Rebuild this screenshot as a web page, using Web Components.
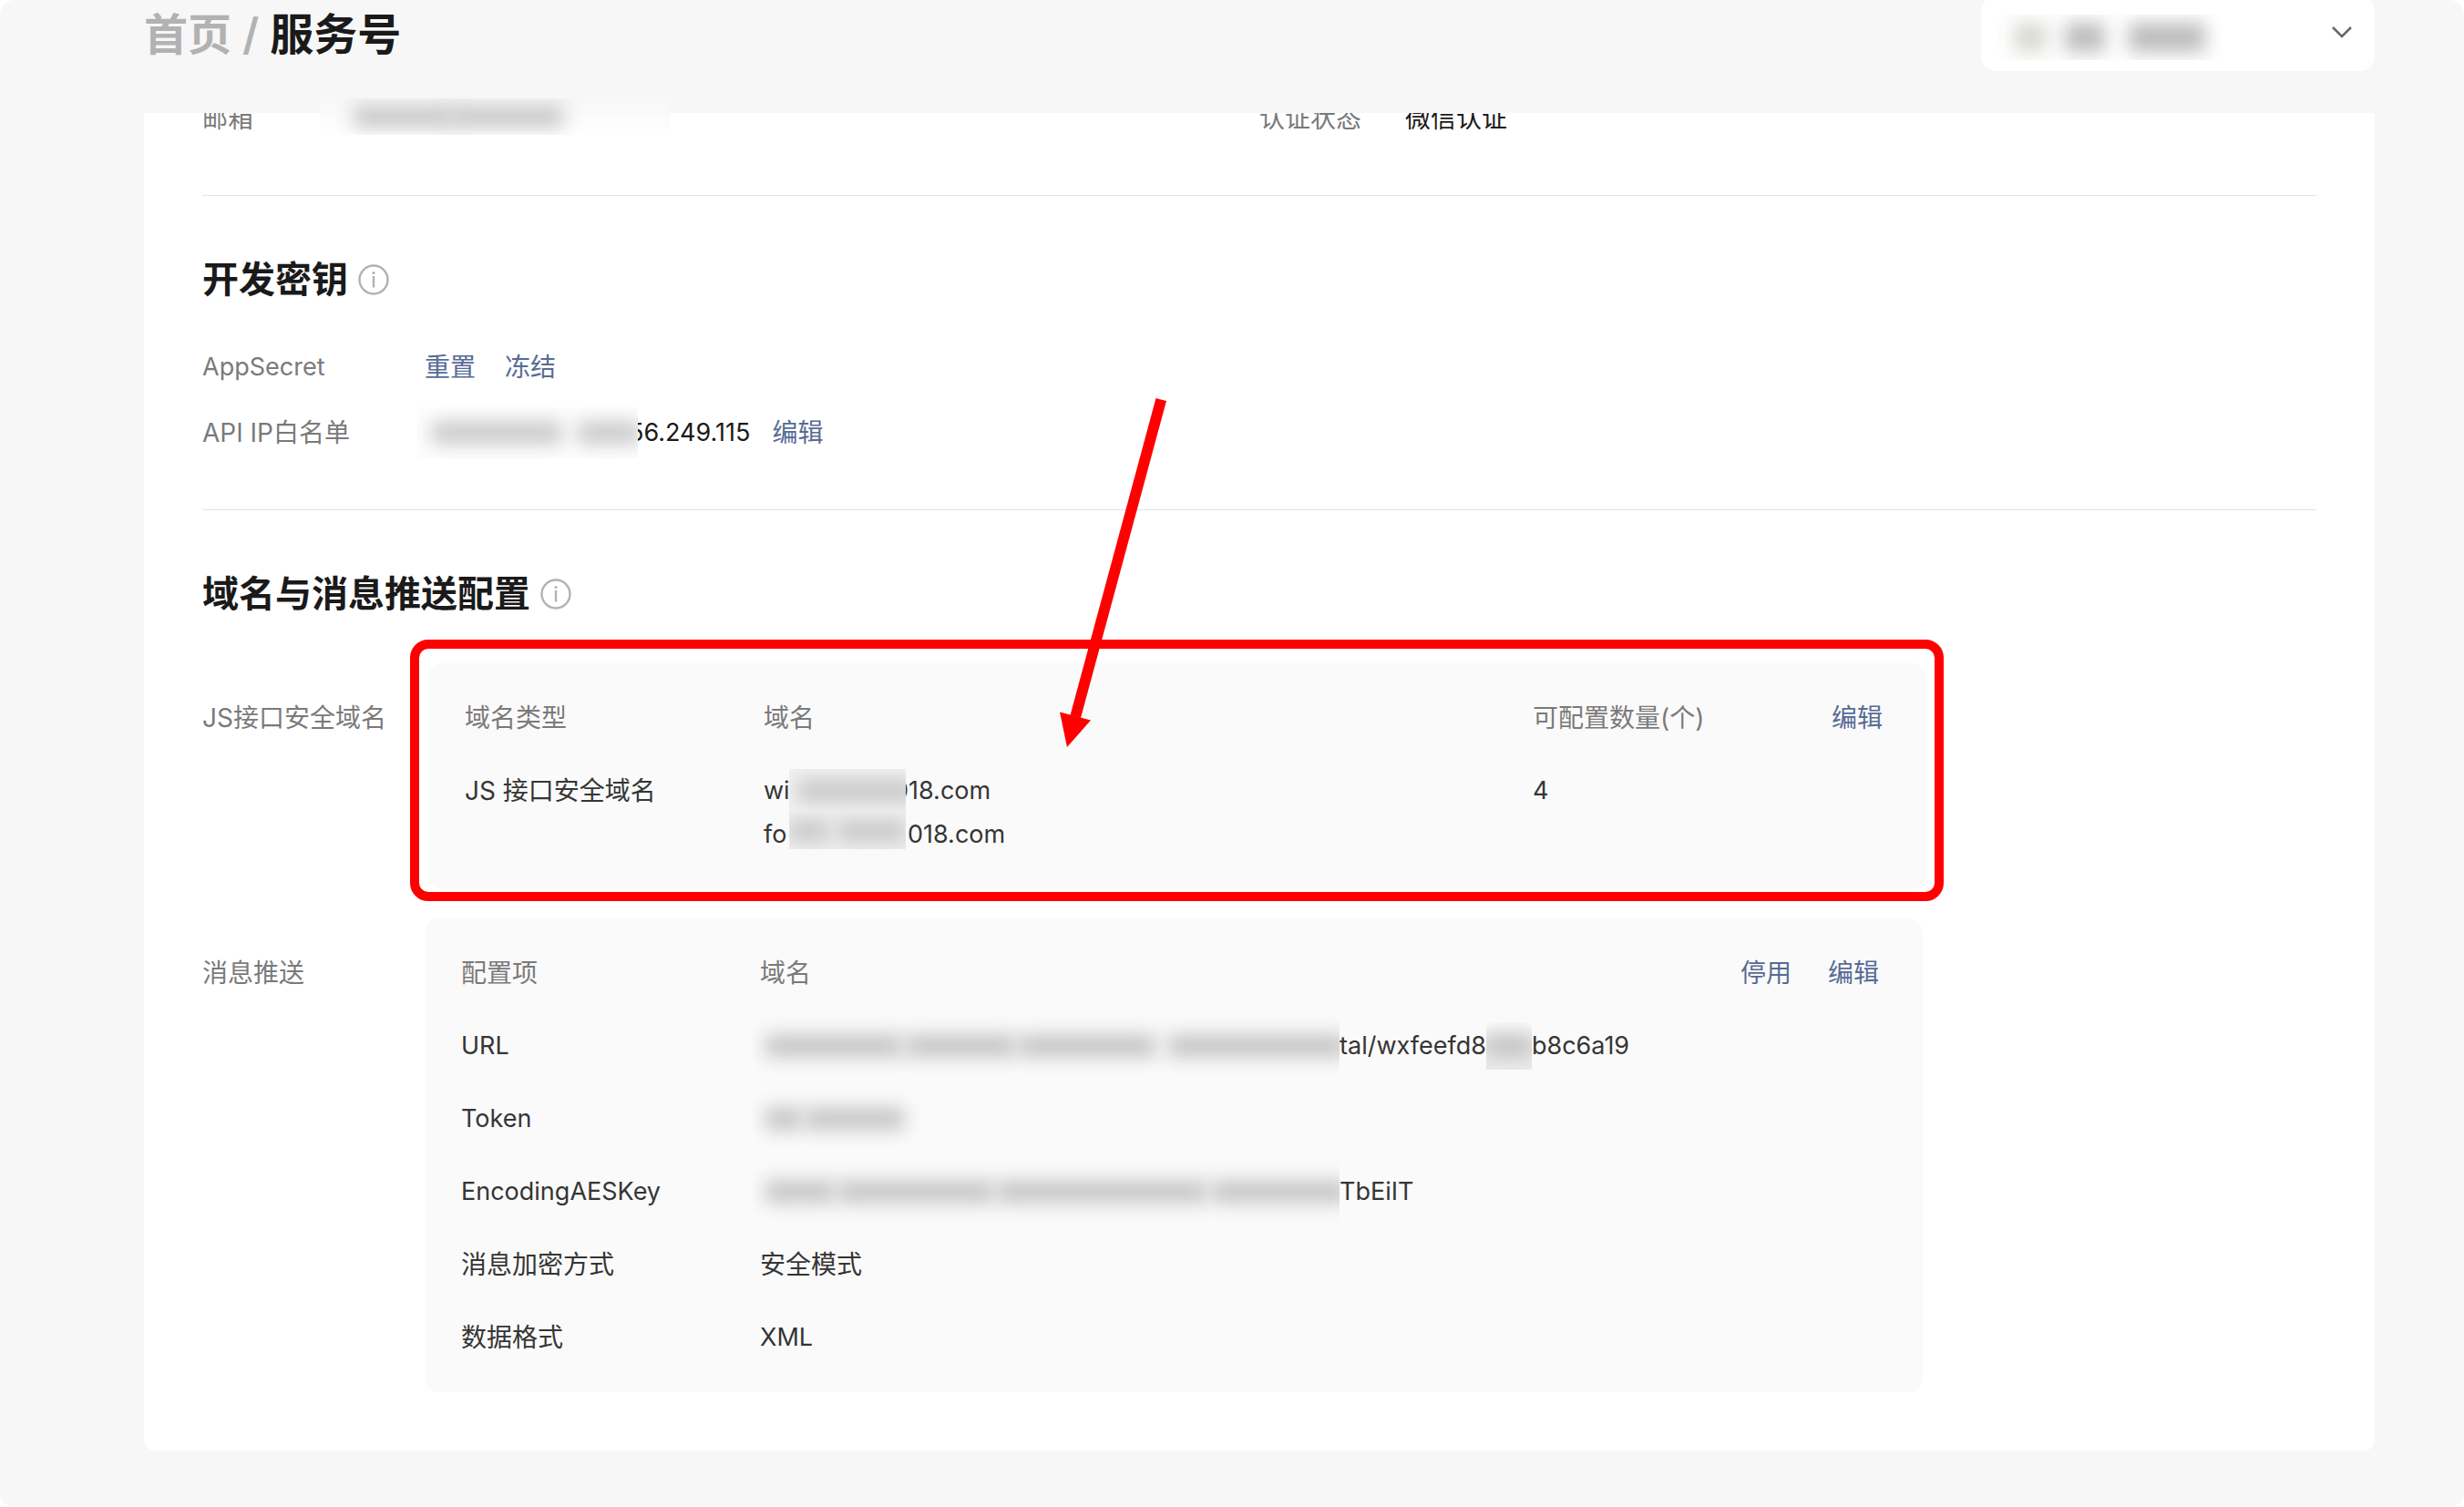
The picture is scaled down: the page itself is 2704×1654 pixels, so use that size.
<!DOCTYPE html>
<html lang="zh-CN">
<head>
<meta charset="utf-8">
<title>服务号</title>
<style>
  body {
    background: #fff;
    color: #1a1a1a;
    font-family: Inter, "Noto Sans CJK SC", sans-serif;
    font-size: 28px;
    line-height: 40px;
    margin: 0;
  }
</style>
</head>
<body>
<account-page>
  <bread-crumb slot="header" parent="首页" current="服务号"></bread-crumb>
  <account-select slot="header"></account-select>

  <profile-row></profile-row>

  <settings-section heading="开发密钥">
    <field-row label="AppSecret" latin>
      <text-link>重置</text-link>
      <text-link>冻结</text-link>
    </field-row>
    <field-row label="API IP白名单">
      <ip-list></ip-list>
    </field-row>
  </settings-section>

  <settings-section heading="域名与消息推送配置">
    <field-row label="JS接口安全域名" panel>
      <domain-table></domain-table>
    </field-row>
    <field-row label="消息推送" panel>
      <push-table></push-table>
    </field-row>
  </settings-section>
</account-page>

<script>
// every element here only needs a shadow root filled with its own markup
class BaseElement extends HTMLElement {
  constructor() {
    super();
    this.root = this.attachShadow({ mode: 'open' });
  }

  connectedCallback() {
    const template = document.createElement('template');
    template.innerHTML = this.render();
    this.root.replaceChildren(template.content.cloneNode(true));
  }
}

// shared by the two grey panels
const tableStyle = `
  :host {
    background: #fafafa;
    border-radius: 16px;
    box-sizing: border-box;
    color: #353535;
    display: block;
    flex: 0 1 1644px;
    line-height: 48px;
    padding: 36px 48px 36px 40px;
    position: relative;
  }
  table {
    border-collapse: collapse;
    table-layout: fixed;
    width: 100%;
  }
  th, td {
    font-weight: 400;
    padding: 0 0 32px;
    text-align: left;
    vertical-align: top;
    white-space: nowrap;
  }
  thead th {
    color: #7a7a7a;
  }
  tbody tr:last-child > * {
    padding-bottom: 0;
  }
  .name {
    width: 328px;
  }
  .latin {
    font-size: 27px;
  }
  .line {
    align-items: center;
    display: flex;
    height: 48px;
  }
`;

// account-page.js
class AccountPage extends BaseElement {
  render() {
    return `
    <style>
      :host {
        background: #f7f7f7;
        border-radius: 16px;
        box-sizing: border-box;
        display: block;
        min-height: 100vh;
        overflow: hidden;
        padding: 0 98px 62px 158px;
      }
      header {
        align-items: flex-start;
        display: flex;
        height: 124px;
        justify-content: space-between;
      }
      main {
        background: #fff;
        border-radius: 0 0 12px 12px;
        padding: 0 64px;
      }
    </style>
    <header><slot name="header"></slot></header>
    <main><slot></slot></main>`;
  }
}

// bread-crumb.js
class BreadCrumb extends BaseElement {
  render() {
    return `
    <style>
      :host {
        display: block;
        font-size: 48px;
        font-weight: 600;
        line-height: 76px;
      }
      nav {
        display: flex;
        gap: 12px;
      }
      a, .sep {
        color: #b2b2b2;
        text-decoration: none;
      }
    </style>
    <nav>
      <a href="#">${this.getAttribute('parent')}</a>
      <span class="sep">/</span>
      <span>${this.getAttribute('current')}</span>
    </nav>`;
  }
}

// account-select.js
class AccountSelect extends BaseElement {
  render() {
    return `
    <style>
      :host {
        background: #fff;
        border-radius: 16px;
        display: block;
        height: 82px;
        margin-top: -4px;
        position: relative;
        width: 432px;
      }
      select {
        appearance: none;
        background: none;
        border: none;
        height: 100%;
        width: 100%;
      }
      blur-mask {
        left: 0;
        position: absolute;
        top: 20px;
      }
      svg {
        pointer-events: none;
        position: absolute;
        right: 24px;
        top: 32px;
      }
    </style>
    <select aria-label="账号"><option></option></select>
    <blur-mask width="280" height="50" bars="36-36-#d8d8d0,92-44,162-84" thick="32" shade="#bcbcbc"></blur-mask>
    <svg width="24" height="14" viewBox="0 0 24 14" fill="none" stroke="#666" stroke-width="2.5">
      <path d="M2 2l10 10L22 2"/>
    </svg>`;
  }
}

// blur-mask.js
// bars is a list of start-width pairs in pixels, with an optional colour
class BlurMask extends BaseElement {
  render() {
    const height = Number(this.getAttribute('height'));
    const thick = Number(this.getAttribute('thick') || 24);
    const shade = this.getAttribute('shade') || '#c4c4c4';
    const bars = this.getAttribute('bars').split(',').map((bar) => {
      const [start, width, color] = bar.split('-');
      return `<i style="left:${start}px;width:${width}px;background:${color || shade}"></i>`;
    }).join('');
    return `
    <style>
      :host {
        background: ${this.getAttribute('fill') || 'none'};
        display: block;
        flex: none;
        height: ${height}px;
        overflow: hidden;
        position: relative;
        width: ${this.getAttribute('width')}px;
        z-index: 1;
      }
      i {
        filter: blur(10px);
        height: ${thick}px;
        position: absolute;
        top: ${Math.round((height - thick) / 2)}px;
      }
    </style>${bars}`;
  }
}

// text-link.js
class TextLink extends BaseElement {
  render() {
    return `
    <style>
      :host {
        display: inline-block;
      }
      a {
        color: #576b95;
        text-decoration: none;
      }
    </style>
    <a href="#"><slot></slot></a>`;
  }
}

// profile-row.js
// the row is scrolled half way under the header
class ProfileRow extends BaseElement {
  render() {
    return `
    <style>
      :host {
        border-bottom: 1px solid #e4e4e4;
        display: grid;
        grid-template-columns: 1fr 1fr;
        padding-bottom: 64px;
        position: relative;
      }
      .item {
        align-items: flex-end;
        display: flex;
        height: 26px;
        overflow: hidden;
      }
      .label {
        color: #7a7a7a;
        width: 160px;
      }
      .mask {
        left: 130px;
        position: absolute;
        top: -16px;
      }
    </style>
    <div class="item"><span class="label">邮箱</span></div>
    <div class="item"><span class="label">认证状态</span><span>微信认证</span></div>
    <blur-mask class="mask" width="384" height="40" bars="36-110,142-124" shade="#c8c8c8"
      fill="linear-gradient(#f7f7f7, #fff)"></blur-mask>`;
  }
}

// settings-section.js
class SettingsSection extends BaseElement {
  render() {
    return `
    <style>
      :host {
        border-bottom: 1px solid #e4e4e4;
        display: block;
        padding: 64px 0;
      }
      :host(:last-of-type) {
        border-bottom: none;
      }
      h2 {
        align-items: center;
        display: flex;
        font-size: 40px;
        font-weight: 600;
        gap: 11px;
        line-height: 56px;
        margin: 0 0 48px;
      }
      .rows {
        display: grid;
        gap: 32px;
      }
    </style>
    <h2>
      ${this.getAttribute('heading')}
      <svg width="34" height="34" viewBox="0 0 34 34" fill="none" stroke="#b2b2b2" stroke-width="2.4">
        <circle cx="17" cy="17" r="15.5"/>
        <circle cx="17" cy="9.5" r="1.6" fill="#b2b2b2" stroke="none"/>
        <path d="M17 13v12.500"/>
      </svg>
    </h2>
    <div class="rows"><slot></slot></div>`;
  }
}

// field-row.js
class FieldRow extends BaseElement {
  render() {
    return `
    <style>
      :host {
        display: flex;
      }
      .label {
        color: #7a7a7a;
        flex: none;
        width: 244px;
      }
      :host([latin]) .label {
        font-size: 27px;
      }
      :host([panel]) .label {
        line-height: 48px;
        padding-top: 36px;
      }
      .value {
        display: flex;
        flex: 1;
        gap: 32px;
      }
    </style>
    <span class="label">${this.getAttribute('label')}</span>
    <div class="value"><slot></slot></div>`;
  }
}

// ip-list.js
class IpList extends BaseElement {
  render() {
    return `
    <style>
      :host {
        align-items: center;
        display: flex;
        height: 40px;
      }
      blur-mask {
        margin: 0 -10px 0 -8px;
      }
      .ip {
        font-size: 27px;
        margin-right: 24px;
      }
    </style>
    <blur-mask width="242" height="56" bars="16-142,176-68" fill="#fdfdfd" shade="#c8c8c8"></blur-mask>
    <span class="ip">56.249.115</span>
    <text-link>编辑</text-link>`;
  }
}

// domain-table.js
class DomainTable extends BaseElement {
  render() {
    return `
    <style>
      ${tableStyle}
      :host {
        margin-left: 4px;
      }
      .domain {
        width: 844px;
      }
      .edit {
        text-align: right;
      }
      .start {
        width: 28px;
      }
      .under {
        margin-left: -14px;
      }
      .after {
        margin-left: 2px;
      }
      .line blur-mask {
        align-self: flex-start;
      }
      .frame {
        border: 10px solid #f00;
        border-radius: 20px;
        inset: -26px -19px -13px -20px;
        pointer-events: none;
        position: absolute;
        z-index: 2;
      }
      .arrow {
        left: 700px;
        position: absolute;
        top: -277px;
      }
    </style>
    <table>
      <thead>
        <tr>
          <th class="name">域名类型</th>
          <th class="domain">域名</th>
          <th>可配置数量(个)</th>
          <th class="edit"><text-link>编辑</text-link></th>
        </tr>
      </thead>
      <tbody>
        <tr>
          <td>JS 接口安全域名</td>
          <td class="latin">
            <div class="line">
              <span class="start">wi</span>
              <blur-mask width="128" height="48" bars="10-128" fill="#f0f0f0" shade="#c8c8c8"></blur-mask>
              <span class="under">018.com</span>
            </div>
            <div class="line">
              <span class="start">fo</span>
              <blur-mask width="128" height="40" bars="0-44,54-74" fill="#f0f0f0" shade="#c8c8c8"></blur-mask>
              <span class="after">018.com</span>
            </div>
          </td>
          <td class="latin">4</td>
          <td></td>
        </tr>
      </tbody>
    </table>
    <div class="frame">
      <svg class="arrow" width="120" height="390" viewBox="0 0 120 390" fill="#f00">
        <path d="M108.500 2l11.500 3L26 353l-11.500-3z"/>
        <path d="M3 346.500l34 9L11 385z"/>
      </svg>
    </div>`;
  }
}

// push-table.js
class PushTable extends BaseElement {
  render() {
    return `
    <style>
      ${tableStyle}
      .actions {
        text-align: right;
        width: 240px;
      }
      .actions text-link + text-link {
        margin-left: 40px;
      }
      .lead {
        margin-left: -8px;
      }
    </style>
    <table>
      <thead>
        <tr>
          <th class="name">配置项</th>
          <th>域名</th>
          <th class="actions"><text-link>停用</text-link><text-link>编辑</text-link></th>
        </tr>
      </thead>
      <tbody>
        <tr>
          <td class="latin">URL</td>
          <td class="latin" colspan="2">
            <div class="line">
              <blur-mask class="lead" width="644" height="70" bars="14-150,168-120,292-150,456-196"></blur-mask>
              <span>tal/wxfeefd8</span>
              <blur-mask width="50" height="52" bars="0-50" fill="linear-gradient(#fafafa, #e8e8e8 50%, #ececec)"></blur-mask>
              <span>b8c6a19</span>
            </div>
          </td>
        </tr>
        <tr>
          <td class="latin">Token</td>
          <td colspan="2">
            <div class="line">
              <blur-mask class="lead" width="200" height="70" bars="14-40,58-108"></blur-mask>
            </div>
          </td>
        </tr>
        <tr>
          <td class="latin">EncodingAESKey</td>
          <td class="latin" colspan="2">
            <div class="line">
              <blur-mask class="lead" width="644" height="70" bars="14-76,94-170,268-230,504-150"></blur-mask>
              <span>TbEiIT</span>
            </div>
          </td>
        </tr>
        <tr>
          <td>消息加密方式</td>
          <td colspan="2">安全模式</td>
        </tr>
        <tr>
          <td>数据格式</td>
          <td class="latin" colspan="2">XML</td>
        </tr>
      </tbody>
    </table>`;
  }
}

customElements.define('blur-mask', BlurMask);
customElements.define('text-link', TextLink);
customElements.define('account-page', AccountPage);
customElements.define('bread-crumb', BreadCrumb);
customElements.define('account-select', AccountSelect);
customElements.define('profile-row', ProfileRow);
customElements.define('settings-section', SettingsSection);
customElements.define('field-row', FieldRow);
customElements.define('ip-list', IpList);
customElements.define('domain-table', DomainTable);
customElements.define('push-table', PushTable);
</script>
</body>
</html>
